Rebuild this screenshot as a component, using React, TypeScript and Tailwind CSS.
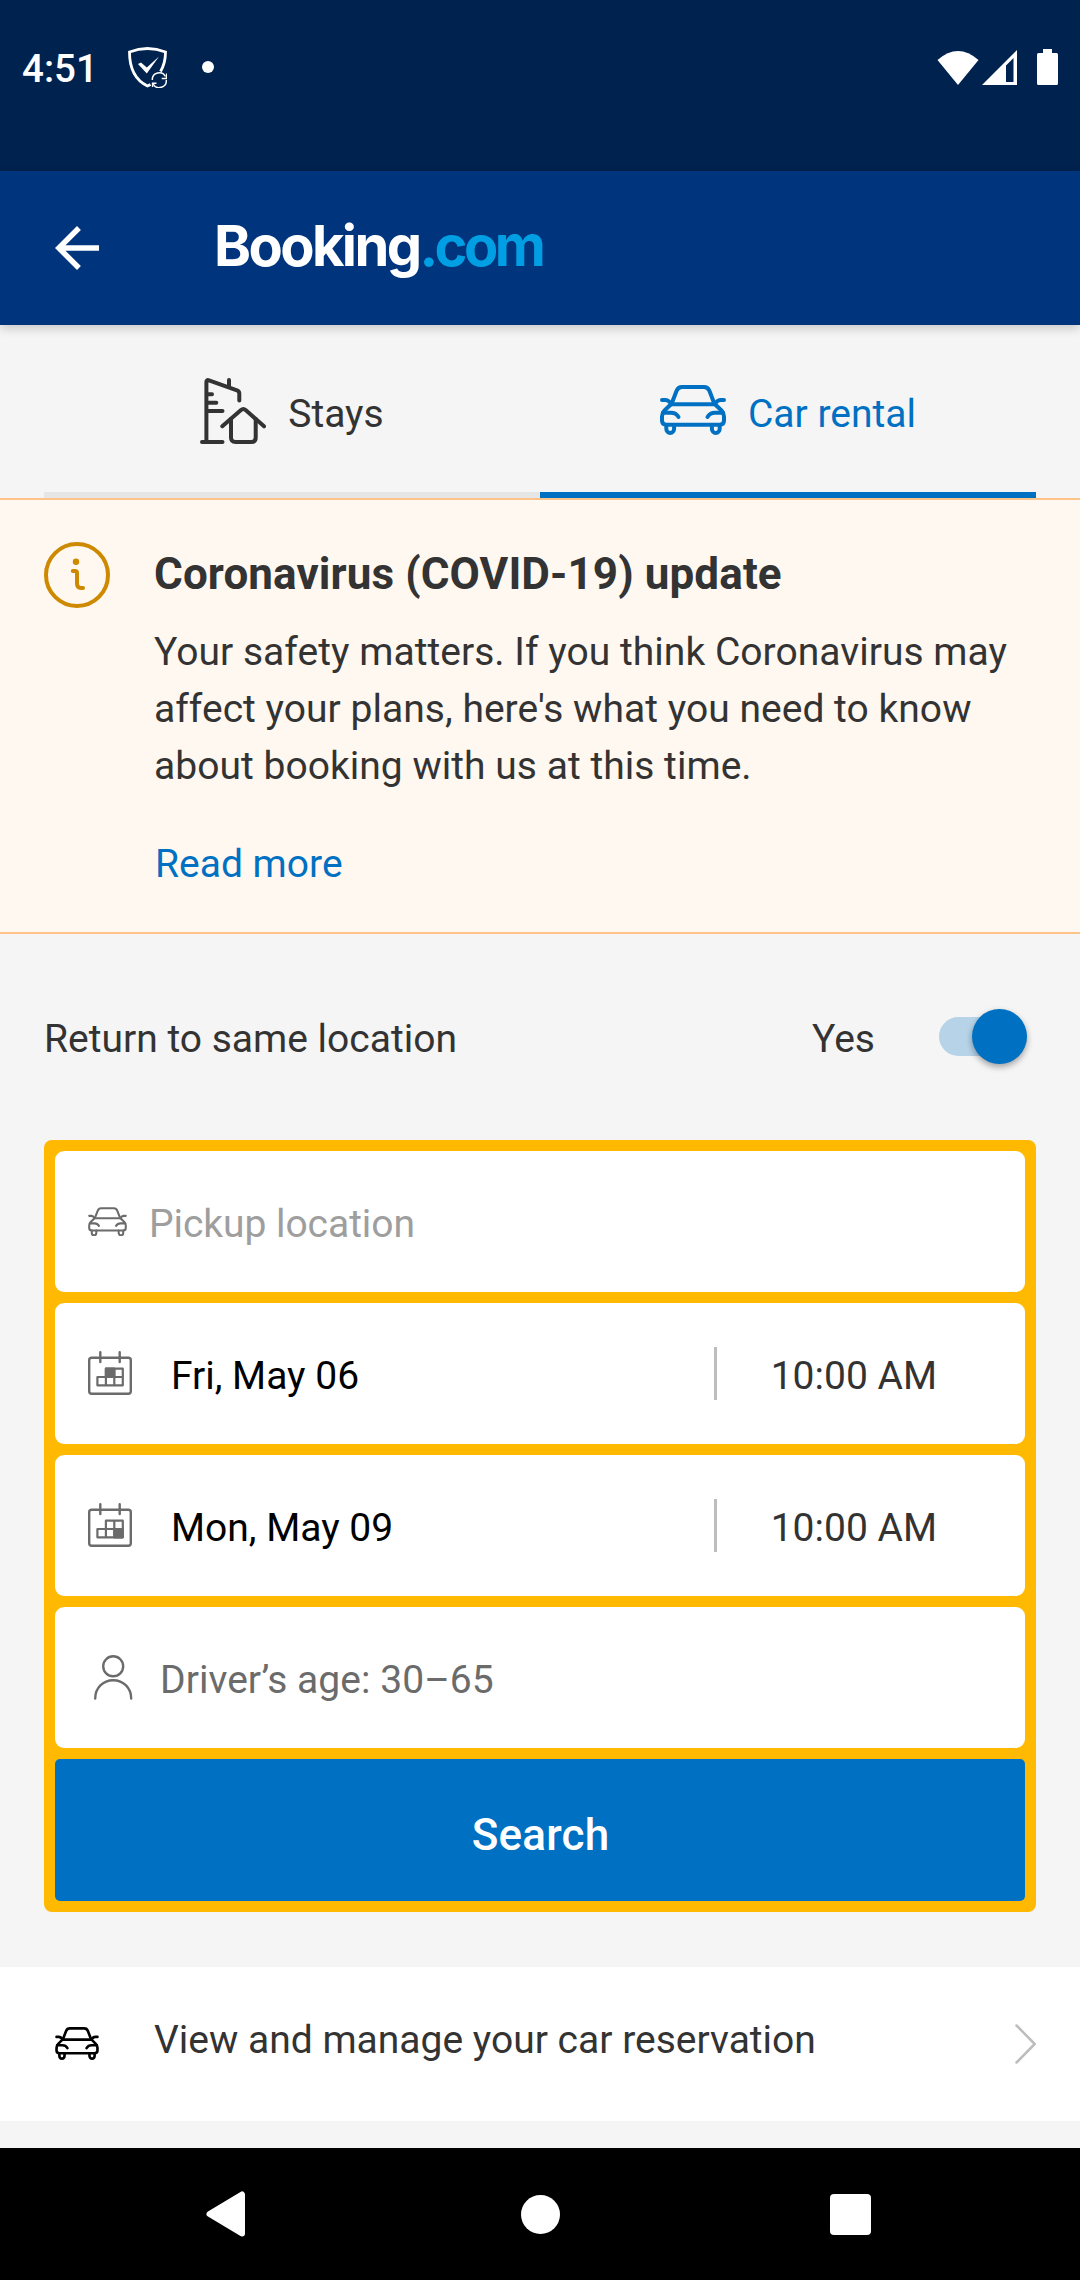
import type { ReactNode } from "react";

function Car({ className, stroke }: { className: string; stroke: number }) {
  return (
    <svg viewBox="0 0 66 50" className={className} fill="none" stroke="currentColor" strokeWidth={stroke} strokeLinecap="round" strokeLinejoin="round">
      <path d="M11.7 18.5 L16.5 6 Q18 2 22 2 H44 Q48 2 49.5 6 L54.3 18.5" />
      <path d="M11 19.2 H55" />
      <path d="M2 15 H5.5 Q8 15 10.5 18 M64 15 H60.500 Q58 15 55.500 18" />
      <path d="M11 19.2 L4.500 25.500 Q2 28 2 31.500 V35.500 Q2 39.700 6.500 39.700 H59.500 Q64 39.700 64 35.500 V31.500 Q64 28 61.500 25.500 L55 19.200" />
      <path d="M3 27.700 H11 Q16 27.700 18.500 32 M63 27.700 H55 Q50 27.700 47.500 32" />
      <path d="M6.300 40 V43.700 a3.900 4.300 0 0 0 7.800 0 V40 M51.900 40 V43.700 a3.900 4.300 0 0 0 7.800 0 V40" />
    </svg>
  );
}

function Stays() {
  return (
    <svg viewBox="0 0 66 66" className="h-[66px] w-[66px]" fill="none" stroke="currentColor" strokeWidth="4" strokeLinecap="round" strokeLinejoin="round">
      <path d="M2 64 H22.500 M6.400 64 V4 Q6.400 1.500 9 2.300 L37 12.300 Q39.300 13.200 39.300 15.500 V22.500" />
      <path d="M29 2 V9 M7 16.300 H12 M7 24.700 H16.300 M7 33 H22.500" />
      <path d="M22.300 48.300 L41 32 Q43.300 30 45.600 32 L64 48.300" />
      <path d="M31 41 V59.500 Q31 64 35.500 64 H51.300 Q55.700 64 55.700 59.500 V41" />
    </svg>
  );
}

function Calendar({ col, row }: { col: number; row: number }) {
  return (
    <svg viewBox="0 0 44 44" className="mb-px h-[44px] w-[44px] text-[#6b6b6b]" fill="none" stroke="currentColor" strokeWidth="2.4" strokeLinecap="round">
      <rect x="1.2" y="6.700" width="41.600" height="36.100" rx="2.500" />
      <path d="M12.300 1.200 V11 M31.700 1.200 V11" />
      <g strokeWidth="2.200" strokeLinejoin="round">
        <path d="M17.900 17.700 H34.800 V34.300 H9.400 V26 H34.800 M17.900 17.700 V34.300 M26.300 17.700 V34.300" />
        <rect x={17.9 + col * 8.4} y={17.7 + row * 8.3} width="8.400" height="8.300" fill="currentColor" />
      </g>
    </svg>
  );
}

function Field({ children }: { children: ReactNode }) {
  return <div className="flex h-[141px] items-center rounded-[9px] bg-white pl-[33px] pr-[88px]">{children}</div>;
}

function DateField({ date, col, row }: { date: string; col: number; row: number }) {
  return (
    <Field>
      <Calendar col={col} row={row} />
      <span className="ml-[39px] flex-1 pt-1 text-black">{date}</span>
      <div className="mr-[54px] h-[53px] w-[3px] bg-[#bdbdbd]" />
      <span className="pt-1">10:00 AM</span>
    </Field>
  );
}

export default function App() {
  return (
    <div className="flex h-[2280px] w-[1080px] flex-col overflow-hidden bg-[#f5f5f5] font-['Roboto',sans-serif] text-[39px] leading-[46px] text-[#333333]">
      <div className="flex h-[171px] shrink-0 items-start bg-[#00224f] pl-[22px] pr-[22px] pt-[47px] text-white">
        <span className="-mt-px w-[106px] text-[38.5px] font-medium">4:51</span>
        <svg viewBox="0 0 39 41" className="h-[41px] w-[39px]" fill="none" stroke="currentColor" strokeWidth="2.8">
          <path d="M32.500 24.500 Q37.500 16 37.500 5 Q19.500 -2 1.500 5 C1.500 22 7 33 19.500 39 L22.500 37.500" />
          <path d="M10 17 L13 15.500 L18.800 20.500 L31 9.500 L18.800 26.500 Z" fill="currentColor" stroke="none" />
          <g strokeWidth="1.500">
            <path d="M24.300 33 A7 7 0 0 1 37.500 29.500 M38.300 33 A7 7 0 0 1 25.200 37" />
            <path d="M38.600 26.500 V31.500 H33.700 M24.600 40 V36.300 H28.500" />
          </g>
        </svg>
        <div className="ml-[35px] mt-[14px] h-3 w-3 rounded-full bg-white" />
        <div className="ml-auto flex items-end pt-[2px]">
          <svg viewBox="0 0 42 35" className="h-[35px] w-[42px]" fill="currentColor">
            <path d="M0.500 10 Q21 -8 41.500 10 L21 35 Z" />
          </svg>
          <svg viewBox="0 0 35 35" className="ml-[3px] h-[35px] w-[35px]" fill="currentColor" fillRule="evenodd">
            <path d="M0 35 L35 0 V35 Z M24 15.500 V32 H31.500 V8 Z" />
          </svg>
          <svg viewBox="0 0 21 36" className="ml-[20px] h-[36px] w-[21px]" fill="currentColor">
            <path d="M6 0 H15 V4 H19.500 Q21 4 21 5.500 V34.500 Q21 36 19.500 36 H1.500 Q0 36 0 34.500 V5.500 Q0 4 1.500 4 H6 Z" />
          </svg>
        </div>
      </div>

      <div className="z-10 flex h-[154px] shrink-0 items-center bg-[#00347d] pl-[44px] text-white shadow-[0_3px_10px_rgba(0,0,0,0.2)]">
        <svg viewBox="0 0 24 24" className="h-[66px] w-[66px]" fill="currentColor">
          <path d="M20 11H7.830l5.590-5.590L12 4l-8 8 8 8 1.410-1.410L7.830 13H20v-2z" />
        </svg>
        <div className="mb-[4px] ml-[104px] whitespace-nowrap font-['Inter',sans-serif] text-[56px] font-bold leading-[66px] tracking-[-2.6px]">
          Booking<span className="tracking-[-3.6px] text-[#009fe3]">.com</span>
        </div>
      </div>

      <div className="flex h-[173px] shrink-0 px-[44px]">
        <div className="flex flex-1 items-start justify-center border-b-[6px] border-[#e6e6e6] pt-[53px]">
          <Stays />
          <span className="ml-[22px] mt-[13px]">Stays</span>
        </div>
        <div className="flex flex-1 items-start justify-center border-b-[6px] border-[#0071c2] pt-[53px] text-[#0071c2]">
          <Car className="mt-[7px] h-[50px] w-[66px]" stroke={4} />
          <span className="ml-[22px] mt-[13px]">Car rental</span>
        </div>
      </div>

      <div className="flex h-[436px] shrink-0 border-y-2 border-[#ffc489] bg-[#fff8f0] pl-[44px] pt-[42px]">
        <svg viewBox="0 0 66 66" className="h-[66px] w-[66px] text-[#cd8900]" fill="none" stroke="currentColor" strokeWidth="4" strokeLinecap="round">
          <circle cx="33" cy="33" r="31" />
          <circle cx="32" cy="19.700" r="3.200" fill="currentColor" stroke="none" />
          <path d="M28.800 29 H31 Q33 29 33 31 V41.500 Q33 46 37 46 H39" />
        </svg>
        <div className="ml-[44px]">
          <h1 className="mt-[6px] text-[44px] font-bold leading-[52px] tracking-[0.1px]">Coronavirus (COVID-19) update</h1>
          <p className="mt-[24px] whitespace-nowrap leading-[57px] tracking-[0.03px]">
            Your safety matters. If you think Coronavirus may
            <br />
            affect your plans, here's what you need to know
            <br />
            about booking with us at this time.
          </p>
          <p className="ml-px mt-[46px] text-[#0071c2]">Read more</p>
        </div>
      </div>

      <div className="flex h-[206px] shrink-0 items-start pl-[44px] pr-[53px] pt-[82px]">
        <span className="flex-1">Return to same location</span>
        <span>Yes</span>
        <div className="ml-[64px] mt-px flex h-[39px] w-[88px] items-center justify-end rounded-full bg-[#b6d3e8]">
          <div className="h-[55px] w-[55px] shrink-0 rounded-full bg-[#0071c2] shadow-[0_3px_6px_rgba(0,0,0,0.35)]" />
        </div>
      </div>

      <div className="mx-[44px] flex h-[772px] shrink-0 flex-col gap-[11px] rounded-[8px] bg-[#ffb900] p-[11px]">
        <Field>
          <Car className="h-[29.500px] w-[39px] text-[#6b6b6b]" stroke={3.5} />
          <span className="ml-[22px] pt-1 tracking-[-0.05px] text-[#9e9e9e]">Pickup location</span>
        </Field>
        <DateField date="Fri, May 06" col={0} row={0} />
        <DateField date="Mon, May 09" col={1} row={1} />
        <Field>
          <svg viewBox="0 0 40 45" className="mb-px ml-[5px] h-[45px] w-[40px] text-[#6b6b6b]" fill="none" stroke="currentColor" strokeWidth="2.400" strokeLinecap="round">
            <circle cx="20.200" cy="11.300" r="10" />
            <path d="M2.200 43.500 C2.200 33 10 25.200 20.200 25.200 S38.200 33 38.200 43.500" />
          </svg>
          <span className="ml-[27px] pt-1 tracking-[0.05px] text-[#6b6b6b]">Driver’s age: 30–65</span>
        </Field>
        <div className="flex h-[142px] items-center justify-center rounded-[5px] bg-[#0071c2] pl-px pt-[10px] text-[44px] font-medium tracking-[0.2px] text-white">Search</div>
      </div>

      <div className="mt-[55px] flex h-[154px] shrink-0 items-start bg-white pl-[55px] pr-[44px]">
        <Car className="mt-[60px] h-[33px] w-[44px] text-black" stroke={4} />
        <span className="ml-[55px] mt-[50px] flex-1">View and manage your car reservation</span>
        <svg viewBox="0 0 21 40" className="mt-[57px] h-[40px] w-[21px] text-[#bdbdbd]" fill="none" stroke="currentColor" strokeWidth="2.500" strokeLinecap="round" strokeLinejoin="round">
          <path d="M1.500 1.500 L19.700 20 L1.500 38.500" />
        </svg>
      </div>

      <div className="mt-auto flex h-[132px] shrink-0 items-center justify-between bg-black pl-[206px] pr-[209px] text-white">
        <svg viewBox="0 0 39 46" className="h-[46px] w-[39px]" fill="currentColor" stroke="currentColor" strokeWidth="6" strokeLinejoin="round">
          <path d="M3.500 23 L36 3.500 V42.500 Z" />
        </svg>
        <div className="ml-[5px] h-[39px] w-[39px] rounded-full bg-white" />
        <div className="h-[41px] w-[41px] rounded-[4px] bg-white" />
      </div>
    </div>
  );
}
